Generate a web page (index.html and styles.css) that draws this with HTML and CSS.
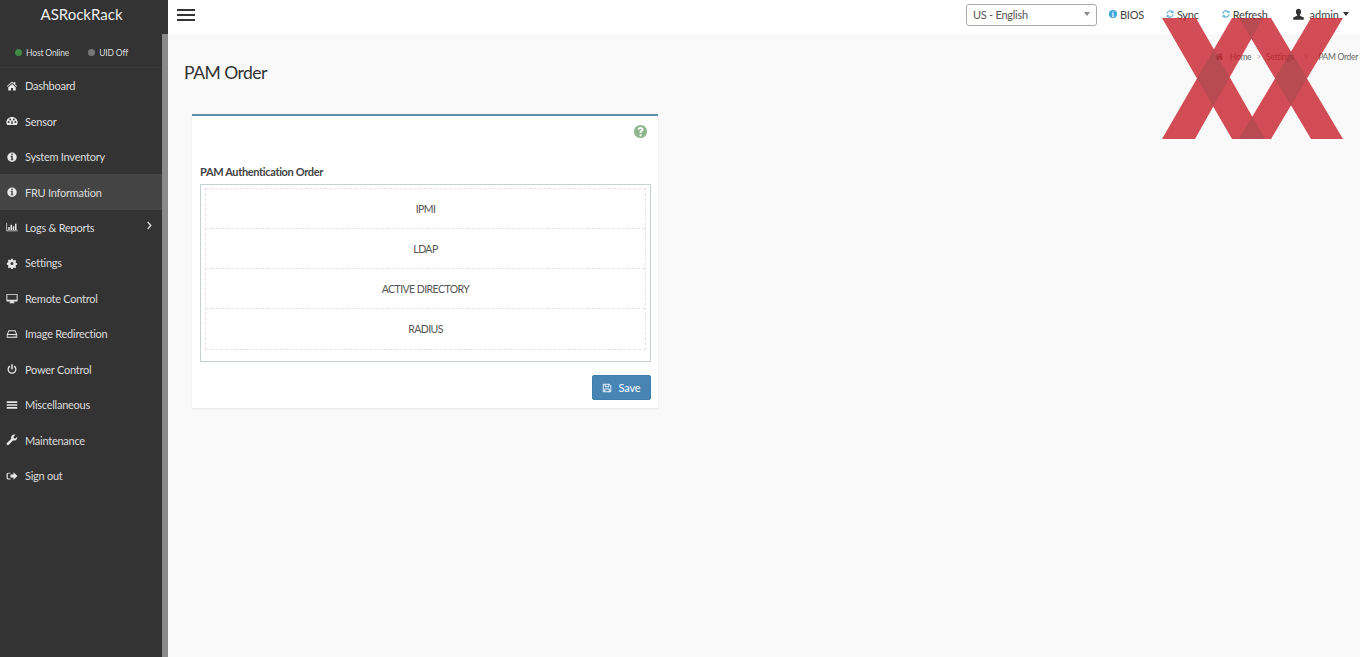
FILE: index.html
```html
<!DOCTYPE html>
<html lang="en">
<head>
<meta charset="utf-8">
<title>PAM Order</title>
<link rel="stylesheet" href="styles.css">
</head>
<body>
<div class="app">
  <aside class="sidebar">
    <div class="logo">ASRockRack</div>
    <div class="side-body">
      <div class="side-main">
        <div class="status">
          <span class="stat"><i class="dot green"></i>Host Online</span>
          <span class="stat"><i class="dot grey"></i>UID Off</span>
        </div>
        <nav class="menu">
          <a class="item"><svg class="ic" viewBox="0 0 16 16"><path d="M8 2 1 8.200l.8.9L8 3.800l6.200 5.300.8-.9-2.600-2.300V2.600h-2v1.600zM3 9.500V14h3.700v-3.200h2.600V14H13V9.500L8 5.200z"/></svg>Dashboard</a>
          <a class="item"><svg class="ic" viewBox="0 0 16 16"><path d="M8 2.500C3.800 2.500.5 5.700.5 9.700c0 1.300.4 2.600 1 3.700h13c.6-1.100 1-2.400 1-3.700 0-4-3.300-7.200-7.500-7.200zM3.500 10.500a1.200 1.200 0 1 1 0-2.400 1.200 1.200 0 0 1 0 2.400zm2-3.300a1.200 1.200 0 1 1 0-2.400 1.200 1.200 0 0 1 0 2.400zm3.500 4.800H7l.4-4.500h1.200zm1.500-4.800a1.200 1.200 0 1 1 0-2.400 1.200 1.200 0 0 1 0 2.400zm2 3.300a1.200 1.200 0 1 1 0-2.400 1.200 1.200 0 0 1 0 2.400z"/></svg>Sensor</a>
          <a class="item"><svg class="ic" viewBox="0 0 16 16"><path fill-rule="evenodd" d="M8 2a6.300 6.300 0 1 0 0 12.600A6.300 6.300 0 0 0 8 2zM7 3.800h2v1.900H7zM6.300 6.800H9v4.400h.8v1.200H6.300v-1.200h.8V8h-.8z"/></svg>System Inventory</a>
          <a class="item active"><svg class="ic" viewBox="0 0 16 16"><path fill-rule="evenodd" d="M8 2a6.300 6.300 0 1 0 0 12.600A6.300 6.300 0 0 0 8 2zM7 3.800h2v1.900H7zM6.300 6.800H9v4.400h.8v1.200H6.300v-1.200h.8V8h-.8z"/></svg>FRU Information</a>
          <a class="item"><svg class="ic" viewBox="0 0 16 16"><path d="M.5 2.500h1v10.300h14v1H.5zM3 8h2v4H3zM6 5h2v7H6zM9 7h2v5H9zM12 3.500h2V12h-2z"/></svg>Logs &amp; Reports<svg class="chev" viewBox="0 0 8 10"><path d="M2 1l3.500 4L2 9" fill="none" stroke="currentColor" stroke-width="1.500"/></svg></a>
          <a class="item"><svg class="ic" viewBox="0 0 16 16"><path fill-rule="evenodd" d="M6.700 1.500h2.600l.4 2 1.300.6 1.800-1.100 1.800 1.800-1.100 1.800.6 1.300 2 .4v2.600l-2 .4-.6 1.300 1.100 1.800-1.800 1.800-1.800-1.100-1.300.6-.4 2H6.700l-.4-2-1.300-.6-1.800 1.100-1.800-1.800 1.100-1.800-.6-1.300-2-.4V7.700l2-.4.6-1.300-1.100-1.800 1.800-1.800 1.800 1.100 1.300-.6zM8 6.400a2.400 2.400 0 1 0 0 4.800 2.400 2.400 0 0 0 0-4.800z" transform="translate(1.200 1.200) scale(.85)"/></svg>Settings</a>
          <a class="item"><svg class="ic" viewBox="0 0 16 16"><path fill-rule="evenodd" d="M1.500 2.500h13c.6 0 1 .4 1 1v8c0 .6-.4 1-1 1h-4.300l.3 1.500h1v1H4.500v-1h1l.3-1.500H1.500c-.6 0-1-.4-1-1v-8c0-.6.4-1 1-1zm.3 1.300v6.400h12.400V3.800z"/></svg>Remote Control</a>
          <a class="item"><svg class="ic" viewBox="0 0 16 16"><path fill-rule="evenodd" d="M3.500 3h9l2.500 5.500V13H1V8.500zm.8 1.200L2.700 8h10.600l-1.600-3.800zM2.200 9.200v2.600h11.600V9.200zM10.500 10a.6.6 0 1 1 0 1.200.6.6 0 0 1 0-1.200zm2 0a.6.6 0 1 1 0 1.200.6.6 0 0 1 0-1.200z"/></svg>Image Redirection</a>
          <a class="item"><svg class="ic" viewBox="0 0 16 16"><path d="M7 1.500h2v7H7zM4.800 3.300l1 1.600a4.200 4.200 0 1 0 4.400 0l1-1.600a6 6 0 1 1-6.400 0z"/></svg>Power Control</a>
          <a class="item"><svg class="ic" viewBox="0 0 16 16"><path d="M1 3h14v2.200H1zM1 6.900h14v2.200H1zM1 10.800h14V13H1z"/></svg>Miscellaneous</a>
          <a class="item"><svg class="ic" viewBox="0 0 16 16"><path d="M15 4.500c0 2.400-2 4.300-4.300 4.300-.5 0-1-.1-1.400-.2l-5.600 5.800c-.7.700-1.800.7-2.400 0-.7-.7-.7-1.700 0-2.400l5.700-5.700c-.2-.5-.3-1-.3-1.500C6.700 2.400 8.600.5 11 .5c.6 0 1.100.1 1.600.3L10 3.500l.6 2 2 .6 2.200-2.600c.1.300.2.700.2 1z"/></svg>Maintenance</a>
          <a class="item"><svg class="ic" viewBox="0 0 16 16"><path d="M6 3.500v1.300H3.300c-.5 0-.9.400-.9.900v4.600c0 .5.400.9.900.9H6v1.300H3c-1.300 0-2.200-1-2.200-2.200V5.700C.8 4.500 1.700 3.500 3 3.500zM10 3l5.200 5-5.200 5v-3H6V6h4z"/></svg>Sign out</a>
        </nav>
      </div>
      <div class="scrollbar"></div>
    </div>
  </aside>
  <div class="main">
    <header class="topbar">
      <button class="burger" aria-label="Menu"><span></span><span></span><span></span></button>
      <div class="top-right">
        <div class="lang"><span>US - English</span><i class="caret"></i></div>
        <a class="tlink bios"><svg class="tic" viewBox="0 0 16 16"><path fill="#3fa7dc" fill-rule="evenodd" d="M8 1.500a6.500 6.500 0 1 0 0 13 6.500 6.500 0 0 0 0-13zM7 3.800h2v1.900H7zM6.300 6.800H9v4.400h.8v1.200H6.300v-1.200h.8V8h-.8z"/></svg>BIOS</a>
        <a class="tlink sync"><svg class="tic" viewBox="0 0 16 16"><path fill="none" stroke="#5fb0d8" stroke-width="1.800" d="M3 7.500a5 5 0 0 1 9-2.500M13 8.500a5 5 0 0 1-9 2.500"/><path fill="#5fb0d8" d="M13.500 2v4.500H9zM2.500 14V9.500H7z"/></svg>Sync</a>
        <a class="tlink refresh"><svg class="tic" viewBox="0 0 16 16"><path fill="none" stroke="#5fb0d8" stroke-width="2" d="M3 7.500a5 5 0 0 1 9-2.500M13 8.500a5 5 0 0 1-9 2.500"/><path fill="#5fb0d8" d="M13.500 2v4.500H9zM2.500 14V9.500H7z"/></svg>Refresh</a>
        <a class="tlink user"><svg class="uic" viewBox="0 0 16 16"><path fill="#333" d="M8 1c2 0 3.200 1.500 3.200 3.500 0 1.500-.7 3-1.500 3.800v1.300l4.800 2.200V14.500h-13V11.800l4.800-2.200V8.300C5.500 7.500 4.800 6 4.800 4.500 4.800 2.500 6 1 8 1z"/></svg>admin<i class="caret dark"></i></a>
      </div>
    </header>
    <section class="content">
      <div class="title-row">
        <h1>PAM Order</h1>
        <ol class="crumbs">
          <li><svg class="home" viewBox="0 0 16 16"><path fill="#555" d="M8 2 1 8.200l.8.9L8 3.800l6.200 5.300.8-.9-2.600-2.300V2.600h-2v1.600zM3 9.500V14h3.700v-3.200h2.600V14H13V9.500L8 5.200z"/></svg>Home</li>
          <li class="sep">&gt;</li>
          <li>Settings</li>
          <li class="sep wide">&gt;</li>
          <li>PAM Order</li>
        </ol>
      </div>
      <div class="card">
        <div class="help-row"><svg class="help" viewBox="0 0 16 16"><path fill="#8fb58f" fill-rule="evenodd" d="M8 1a7 7 0 1 0 0 14A7 7 0 0 0 8 1zM7 11h2v2H7zM8 3.300c1.800 0 3.100 1 3.100 2.600 0 1.100-.6 1.700-1.300 2.200-.6.400-.8.600-.8 1.300v.3H7v-.5c0-1.100.4-1.700 1.100-2.200.6-.4.900-.7.900-1.100 0-.5-.4-.8-1-.8-.7 0-1.100.4-1.200 1.100L4.800 5.800C5 4.300 6.200 3.300 8 3.300z"/></svg></div>
        <label class="field-label">PAM Authentication Order</label>
        <div class="order-box">
          <ul class="order-list">
            <li>IPMI</li>
            <li>LDAP</li>
            <li>ACTIVE DIRECTORY</li>
            <li>RADIUS</li>
          </ul>
        </div>
        <div class="actions">
          <button class="save"><svg class="sic" viewBox="0 0 16 16"><path fill="none" stroke="#fff" stroke-width="1.400" d="M2 2h10l2 2v10H2zM5 2v4h6V2M4.500 14V9.500h7V14"/></svg>Save</button>
        </div>
      </div>
    </section>
  </div>
</div>
<svg class="xmark" viewBox="0 0 181 122" aria-hidden="true">
  <path fill="#c7202a" fill-opacity=".8" d="M0 0H34L103 121H70ZM70 0H101L33 121H0ZM77 0H109L181 121H149ZM149 0H181L109 121H77Z"/>
  <path fill="#464646" fill-opacity=".18" d="M51.900 31.300 67.800 59.200 51.200 88.500 35 60.500ZM129 33.600 145 60.500 129 87.400 113 60.500ZM77 0H101L89.300 20.700ZM90.300 98.700 103 121H77Z"/>
</svg>
</body>
</html>
```

FILE: styles.css
```css
* { box-sizing: border-box; }
html, body { margin: 0; height: 100%; overflow: hidden; }
body { font-family: "Lato", "Noto Sans", sans-serif; color: #444; background: #f9f9f9; position: relative; }
.app { display: flex; height: 657px; }

.sidebar { width: 168px; flex: none; background: #333; display: flex; flex-direction: column; color: #e4e4e4; }
.logo { height: 34px; text-align: center; font-size: 15px; line-height: 28px; color: #eee; padding-right: 5px; }
.side-body { flex: 1; display: flex; min-height: 0; }
.side-main { flex: 1; min-width: 0; }
.scrollbar { width: 6px; background: #8a8a8a; }
.status { height: 34px; border-bottom: 1px solid #3a3a3a; display: flex; align-items: center; padding: 4px 0 0 15px; gap: 19px; font-size: 8.500px; letter-spacing: -.15px; color: #ddd; }
.stat { display: flex; align-items: center; }
.dot { width: 7px; height: 7px; border-radius: 50%; margin-right: 4px; }
.dot.green { background: #3f8a45; }
.dot.grey { background: #777; }
.menu { display: flex; flex-direction: column; }
.item { height: 35.450px; display: flex; align-items: center; padding-left: 6px; font-size: 11px; letter-spacing: -.25px; color: #ddd; position: relative; }
.item.active { background: #444; }
.ic { width: 12px; height: 12px; fill: #e8e8e8; margin-right: 7px; flex: none; }
.chev { width: 7px; height: 9px; position: absolute; right: 9px; top: 11px; color: #ddd; }

.main { flex: 1; min-width: 0; display: flex; flex-direction: column; }
.topbar { height: 34px; background: #fff; display: flex; align-items: flex-start; justify-content: space-between; padding: 4px 11px 0 9px; }
.burger { width: 18px; height: 12px; padding: 0; border: 0; background: none; display: flex; flex-direction: column; justify-content: space-between; margin-top: 5px; }
.burger span { display: block; height: 2px; background: #333; }
.top-right { display: flex; align-items: center; font-size: 11px; letter-spacing: -.25px; color: #444; height: 22px; }
.lang { width: 131px; height: 22px; border: 1px solid #aaa; border-radius: 3px; display: flex; align-items: center; justify-content: space-between; padding: 0 6px 2px; color: #555; margin-right: 11px; background: #fff; }
.caret { width: 0; height: 0; border-left: 3.500px solid transparent; border-right: 3.500px solid transparent; border-top: 4px solid #888; }
.caret.dark { border-top-color: #333; margin-left: 4px; }
.tlink { display: flex; align-items: center; padding-bottom: 2px; }
.tic { width: 10px; height: 10px; margin-right: 2px; }
.bios { margin-right: 21px; }
.sync { margin-right: 22px; }
.refresh { margin-right: 24px; }
.user { letter-spacing: 0; }
.uic { width: 13px; height: 13px; margin-right: 5px; }

.content { flex: 1; padding: 0 2px 0 16px; }
.title-row { height: 80px; position: relative; }
h1 { margin: 0; font-size: 17.500px; font-weight: 400; letter-spacing: -.5px; color: #333; line-height: 26px; padding-top: 26px; }
.crumbs { position: absolute; right: 0; top: 17px; list-style: none; margin: 0; padding: 0; display: flex; font-size: 8.500px; letter-spacing: -.3px; color: #666; line-height: 13px; }
.home { width: 9px; height: 9px; margin-right: 6px; vertical-align: -1px; }
.sep { color: #bbb; margin: 0 5px; }
.sep.wide { margin: 0 10px; }

.card { width: 466px; height: 294px; margin-left: 8px; background: #fff; border-top: 2px solid #5f8ea8; box-shadow: 0 1px 2px rgba(0,0,0,.08); padding: 0 7px 0 8px; }
.help-row { height: 23px; display: flex; justify-content: flex-end; align-items: flex-end; padding-right: 2px; }
.help { width: 15px; height: 15px; margin-right: 1px; }
.field-label { display: block; font-size: 11px; letter-spacing: -.35px; font-weight: 700; color: #444; margin-top: 25px; line-height: 15px; }
.order-box { height: 178px; border: 1px solid #c6d2d2; margin-top: 5px; padding: 3px 4px; }
.order-list { list-style: none; margin: 0; padding: 0; border: 1px dashed #e0e4e4; }
.order-list li { height: 40px; display: flex; align-items: center; justify-content: center; font-size: 10.500px; letter-spacing: -.55px; color: #555; border-bottom: 1px dashed #e0e4e4; }
.order-list li:last-child { border-bottom: 0; }
.actions { display: flex; justify-content: flex-end; margin-top: 13px; }
.save { width: 59px; height: 25px; border: 1px solid #3f7fad; border-radius: 2px; background: #4885b5; color: #fff; font: inherit; font-size: 11px; letter-spacing: -.1px; display: flex; align-items: center; justify-content: center; padding: 0; }
.sic { width: 10px; height: 10px; margin-right: 6px; }

.xmark { position: absolute; left: 1162px; top: 18px; width: 181px; height: 122px; }
```
